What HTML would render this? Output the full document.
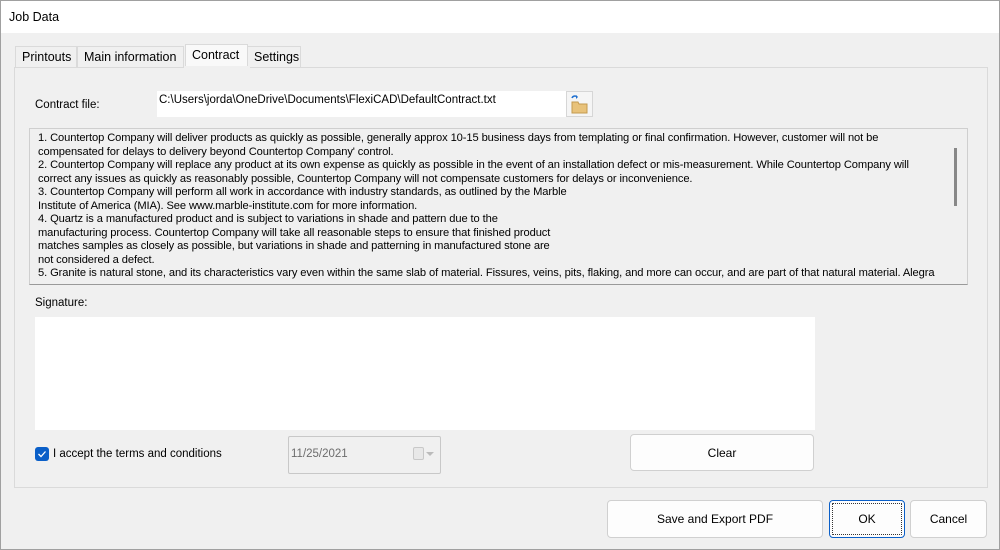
<!DOCTYPE html>
<html><head><style>
*{box-sizing:border-box;margin:0;padding:0}
body{width:1000px;height:550px;background:#f0f0f0;font-family:"Liberation Sans",sans-serif;font-size:12px;color:#000;position:relative;overflow:hidden}
.abs{position:absolute}
.btn{position:absolute;background:#fdfdfd;border:1px solid #d0d0d0;border-radius:4px;display:flex;align-items:center;justify-content:center;font-size:12px}
.tab{position:absolute;top:46px;height:22px;border:1px solid #dadada;border-bottom:none;background:#f0f0f0;font-size:12.5px;padding:3px 6px 0}
</style></head><body>
<div class="abs" style="left:0;top:0;width:1000px;height:33px;background:#fff;border:1px solid #c8c8c8;border-bottom:none"></div>
<div class="abs" style="left:9px;top:10px;font-size:12.5px">Job Data</div>
<div class="abs" style="left:0;top:0;width:1000px;height:550px;border:1px solid #a0a0a0;pointer-events:none"></div>

<div class="tab" style="left:15px;width:62px">Printouts</div>
<div class="tab" style="left:77px;width:107px">Main information</div>
<div class="tab" style="left:247px;width:54px">Settings</div>
<div class="abs" style="left:14px;top:67px;width:974px;height:421px;border:1px solid #dadada;background:#f0f0f0"></div>
<div class="tab" style="left:185px;top:44px;height:25px;width:63px;background:#f9f9f9;border-color:#dadada;padding-top:3px">Contract</div>
<div class="abs" style="left:184px;top:66px;width:66px;height:3px;background:#f0f0f0"></div>

<div class="abs" style="left:35px;top:99px;font-size:11.5px">Contract file:</div>
<div class="abs" style="left:157px;top:91px;width:409px;height:26px;background:#fff;font-size:11.5px;padding:3px 0 0 2px">C:\Users\jorda\OneDrive\Documents\FlexiCAD\DefaultContract.txt</div>
<div class="abs" style="left:566px;top:91px;width:27px;height:26px;background:#f5f5f5;border:1px solid #d6d6d6">
<svg width="25" height="24" viewBox="0 0 25 24"><path d="M5 10h6l1 2h8v9H5z" fill="#e8c27a" stroke="#c49a50" stroke-width="1"/><path d="M5 6a3 3 0 0 1 5-1" fill="none" stroke="#1e6fd0" stroke-width="1.5"/><path d="M9 3l2 2-2 2" fill="#1e6fd0"/></svg></div>

<div class="abs" style="left:29px;top:128px;width:939px;height:157px;background:#f0f0f0;border:1px solid #cfcfcf;border-bottom-color:#9a9a9a"></div>
<div class="abs" style="left:954px;top:148px;width:3px;height:58px;background:#888"></div>
<div class="abs" style="left:38px;top:132px;font-size:11.15px;line-height:13.5px;white-space:nowrap;letter-spacing:-0.1px">
1. Countertop Company will deliver products as quickly as possible, generally approx 10-15 business days from templating or final confirmation. However, customer will not be<br>
compensated for delays to delivery beyond Countertop Company' control.<br>
2. Countertop Company will replace any product at its own expense as quickly as possible in the event of an installation defect or mis-measurement. While Countertop Company will<br>
correct any issues as quickly as reasonably possible, Countertop Company will not compensate customers for delays or inconvenience.<br>
3. Countertop Company will perform all work in accordance with industry standards, as outlined by the Marble<br>
Institute of America (MIA). See www.marble-institute.com for more information.<br>
4. Quartz is a manufactured product and is subject to variations in shade and pattern due to the<br>
manufacturing process. Countertop Company will take all reasonable steps to ensure that finished product<br>
matches samples as closely as possible, but variations in shade and patterning in manufactured stone are<br>
not considered a defect.<br>
5. Granite is natural stone, and its characteristics vary even within the same slab of material. Fissures, veins, pits, flaking, and more can occur, and are part of that natural material. Alegra</div>

<div class="abs" style="left:35px;top:297px;font-size:11.5px">Signature:</div>
<div class="abs" style="left:35px;top:317px;width:780px;height:113px;background:#fff"></div>

<div class="abs" style="left:35px;top:447px;width:14px;height:14px;background:#0a5fc8;border-radius:3px"><svg width="14" height="14"><path d="M3.5 7l2.5 2.5 4.5-5" fill="none" stroke="#fff" stroke-width="1.3"/></svg></div>
<div class="abs" style="left:53px;top:448px;font-size:11.5px">I accept the terms and conditions</div>
<div class="abs" style="left:288px;top:436px;width:153px;height:38px;border:1px solid #c8c8c8;border-radius:2px;font-size:11.5px;color:#6d6d6d;padding:11px 0 0 2px">11/25/2021</div>
<div class="abs" style="left:413px;top:447px;width:11px;height:13px;border:1px solid #c8c8c8;background:#e8e8e8;border-radius:2px"></div>
<div class="abs" style="left:426px;top:452px;border:4px solid transparent;border-top-color:#bbb;border-bottom:none"></div>

<div class="btn" style="left:630px;top:434px;width:184px;height:37px">Clear</div>
<div class="btn" style="left:607px;top:500px;width:216px;height:38px">Save and Export PDF</div>
<div class="btn" style="left:829px;top:500px;width:76px;height:38px;border:1px solid #0a5fc8;outline:1px dotted #333;outline-offset:-4px">OK</div>
<div class="btn" style="left:910px;top:500px;width:77px;height:38px">Cancel</div>
</body></html>
